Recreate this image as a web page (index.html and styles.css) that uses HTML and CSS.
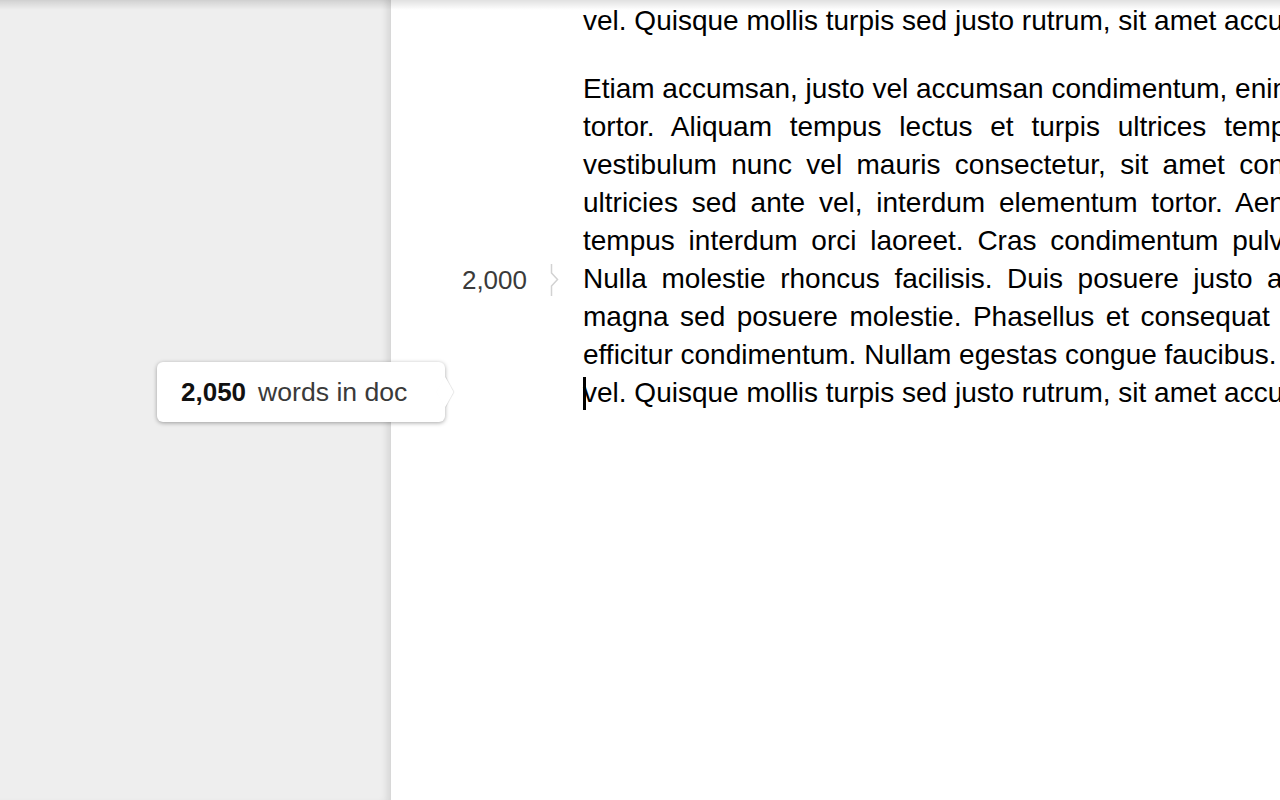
FILE: index.html
```html
<!DOCTYPE html>
<html>
<head>
<meta charset="utf-8">
<link rel="stylesheet" href="styles.css">
</head>
<body>
<div class="app">
  <aside class="sidebar">
    <div class="tip">
      <span class="tip-num">2,050</span>
      <span class="tip-label">words in doc</span>
    </div>
  </aside>
  <main class="page">
    <div class="gutter">
      <div class="marker">
        <span class="marker-num">2,000</span>
        <svg class="marker-tick" width="12" height="36" viewBox="0 0 12 36"><path d="M3.5 2 V11 L9.5 17.5 L3.5 24 V34" fill="none" stroke="#d2d2d2" stroke-width="1.5"/></svg>
      </div>
    </div>
    <div class="text">
      <p class="para para-top">
        <span class="line">vel. Quisque mollis turpis sed justo rutrum, sit amet accumsan</span>
      </p>
      <p class="para">
        <span class="line">Etiam accumsan, justo vel accumsan condimentum, enim</span>
        <span class="line ws-10">tortor. Aliquam tempus lectus et turpis ultrices tempor</span>
        <span class="line ws-5">vestibulum nunc vel mauris consectetur, sit amet congue</span>
        <span class="line ws-6">ultricies sed ante vel, interdum elementum tortor. Aenean</span>
        <span class="line ws-6">tempus interdum orci laoreet. Cras condimentum pulvinar</span>
        <span class="line ws-7">Nulla molestie rhoncus facilisis. Duis posuere justo a</span>
        <span class="line ws-4">magna sed posuere molestie. Phasellus et consequat</span>
        <span class="line">efficitur condimentum. Nullam egestas congue faucibus. Sed</span>
        <span class="line"><span class="caret"></span>vel. Quisque mollis turpis sed justo rutrum, sit amet accumsan</span>
      </p>
    </div>
  </main>
  <div class="topshadow"></div>
</div>
</body>
</html>
```

FILE: styles.css
```css
html, body {
  margin: 0;
  padding: 0;
  height: 100%;
  overflow: hidden;
  background: #fff;
}
.app {
  display: flex;
  width: 1280px;
  height: 800px;
  overflow: hidden;
  position: relative;
  font-family: "Liberation Sans", Arial, Helvetica, sans-serif;
}
.sidebar {
  flex: 0 0 390px;
  background: #eeeeee;
  box-shadow: inset -7px 0 7px -4px rgba(0,0,0,0.10);
  border-right: 1px solid #d8d8d8;
  position: relative;
  z-index: 2;
}
.tip {
  position: absolute;
  left: 157px;
  top: 362px;
  width: 288px;
  height: 60px;
  box-sizing: border-box;
  background: #fff;
  border-radius: 6px;
  box-shadow: 0 1px 4px rgba(0,0,0,0.35);
  display: flex;
  align-items: center;
  padding-left: 24px;
  gap: 12px;
  font-size: 26px;
}
.tip::after {
  content: "";
  position: absolute;
  right: -11px;
  top: 19px;
  width: 22px;
  height: 22px;
  transform: scaleX(0.55) rotate(45deg);
  background: #fff;
  box-shadow: 1px -1px 1px rgba(0,0,0,0.12);
}
.tip-num {
  font-weight: bold;
  color: #111;
}
.tip-label {
  color: #3a3a3a;
  font-size: 26.6px;
}
.page {
  flex: 1;
  display: flex;
  min-width: 0;
}
.gutter {
  flex: 0 0 192px;
  position: relative;
}
.marker {
  position: absolute;
  top: 262px;
  right: 23px;
  display: flex;
  align-items: center;
  gap: 21px;
}
.marker-num {
  font-size: 26px;
  color: #3a3a3a;
}
.marker-tick {
  display: block;
}
.text {
  flex: 0 0 auto;
  width: 900px;
  font-size: 28px;
  line-height: 38px;
  color: #000;
}
.para {
  margin: 0 0 30px 0;
}
.para-top {
  margin-top: 2px;
}
.line {
  display: block;
  white-space: nowrap;
}
.ws-4 { word-spacing: 3.7px; }
.ws-5 { word-spacing: 6.6px; }
.ws-6 { word-spacing: 6px; }
.ws-7 { word-spacing: 6.8px; }
.ws-10 { word-spacing: 10px; }
.caret {
  display: inline-block;
  width: 3px;
  height: 33px;
  background: #000;
  vertical-align: -8px;
  margin-right: -3px;
}
.topshadow {
  position: absolute;
  left: 0;
  top: 0;
  width: 100%;
  height: 10px;
  background: linear-gradient(rgba(0,0,0,0.12), rgba(0,0,0,0));
  z-index: 5;
}
```
